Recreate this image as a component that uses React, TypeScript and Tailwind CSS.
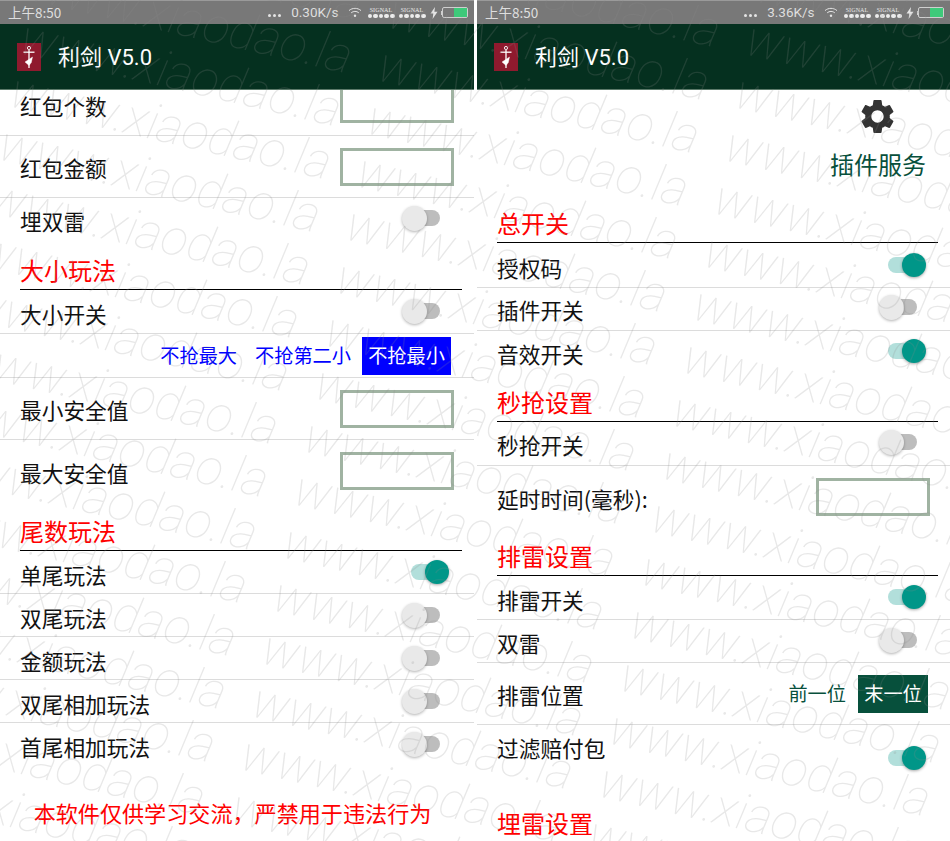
import React from "react";

const GEAR = "M19.14 12.94c.04-.3.06-.61.06-.94 0-.32-.02-.64-.07-.94l2.03-1.58a.49.49 0 0 0 .12-.61l-1.92-3.32a.488.488 0 0 0-.59-.22l-2.39.96c-.5-.38-1.03-.7-1.62-.94l-.36-2.54a.484.484 0 0 0-.48-.41h-3.84c-.24 0-.43.17-.47.41l-.36 2.54c-.59.24-1.13.57-1.62.94l-2.39-.96c-.22-.08-.47 0-.59.22L2.74 8.87c-.12.21-.08.47.12.61l2.03 1.58c-.05.3-.09.63-.09.94s.02.64.07.94l-2.03 1.58a.49.49 0 0 0-.12.61l1.92 3.32c.12.22.37.29.59.22l2.39-.96c.5.38 1.03.7 1.62.94l.36 2.54c.05.24.24.41.48.41h3.84c.24 0 .44-.17.47-.41l.36-2.54c.59-.24 1.13-.56 1.62-.94l2.39.96c.22.08.47 0 .59-.22l1.92-3.32c.12-.22.07-.47-.12-.61l-2.01-1.58zM12 15.6c-1.98 0-3.6-1.62-3.6-3.6s1.62-3.6 3.6-3.6 3.6 1.62 3.6 3.6-1.62 3.6-3.6 3.6z";

function Toggle({ on }: { on?: boolean }) {
  return (
    <div className={on ? "relative w-[29px] h-[16px] rounded-full bg-[#b2dfdb] shrink-0" : "relative w-[28px] h-[16px] rounded-full bg-[#bdbdbd] shrink-0"}>
      <div
        className={
          on
            ? "absolute left-[14px] top-[-4px] w-[24px] h-[24px] rounded-full bg-[#009688] shadow-[0_1px_3px_rgba(0,0,0,0.35)]"
            : "absolute left-[-10px] top-[-4px] w-[25px] h-[25px] rounded-full bg-[#e9e9e9] shadow-[0_1px_3px_rgba(0,0,0,0.3)]"
        }
      />
    </div>
  );
}

function Box() {
  return <div className="w-[114px] h-[38px] border-[3px] border-[#a0b3a2] shrink-0" />;
}

function Heading({ text, h }: { text: string; h: string }) {
  return (
    <div className={`${h} ml-[20px] mr-[12.5px] flex items-end pb-[7px] border-b border-black text-[24px] leading-[24px] text-[#ff0000]`}>
      {text}
    </div>
  );
}

function SwitchRow({ label, on, pad, h, line = true, right }: { label: string; on?: boolean; pad: string; h: string; line?: boolean; right?: boolean }) {
  return (
    <div className={`${h} ${pad} ${line ? "border-b border-[#dcdcdc]" : ""} ${right ? "pr-[33px]" : "pr-[34px]"} flex items-start justify-between pl-[20px]`}>
      <span className="leading-[22px]">{label}</span>
      <Toggle on={on} />
    </div>
  );
}

function BoxRow({ label, h, line = true }: { label: string; h: string; line?: boolean }) {
  return (
    <div className={`${h} ${line ? "border-b border-[#dcdcdc]" : ""} flex items-center justify-between pl-[20px] pr-[20px]`}>
      <span className="mt-[3px] leading-[22px]">{label}</span>
      <Box />
    </div>
  );
}

function Logo() {
  return (
    <svg width="24" height="28" viewBox="0 0 24 28" className="shrink-0">
      <rect width="24" height="28" fill="#8f1a2e" />
      <g fill="#fff" stroke="#fff">
        <circle cx="12" cy="5" r="1.6" fill="none" strokeWidth="0.9" />
        <path d="M6.5 9.2h11" strokeWidth="1.3" />
        <path d="M12 7v18" strokeWidth="1.3" />
        <path d="M8 19l7.5-5-1.2 5.5-2.2 3z" strokeWidth="0.4" />
      </g>
    </svg>
  );
}

function StatusBar({ speed }: { speed: string }) {
  return (
    <div className="h-[24px] shrink-0 bg-[#787878] border-t border-[#9a9a9a] flex items-center pl-[8px] pr-[6px] text-[#dedede]">
      <span className="text-[13.5px] leading-none">上午8:50</span>
      <div className="ml-auto flex items-center">
        <div className="flex gap-[2px] items-end h-[8px]">
          <i className="block w-[3px] h-[3px] rounded-full bg-[#e4e4e4]" />
          <i className="block w-[3px] h-[3px] rounded-full bg-[#e4e4e4]" />
          <i className="block w-[3px] h-[3px] rounded-full bg-[#e4e4e4]" />
        </div>
        <span className="ml-[10px] text-[13.5px] leading-none font-['Roboto',sans-serif]">{speed}</span>
        <svg width="14" height="11" viewBox="0 0 14 11" className="ml-[9px]" fill="none" stroke="#e4e4e4">
          <path d="M1 3.6C4.4.6 9.6.6 13 3.6" strokeWidth="1" />
          <path d="M3.2 5.8c2.2-1.9 5.4-1.9 7.6 0" strokeWidth="1" />
          <circle cx="7" cy="8.8" r="1.2" fill="#e4e4e4" stroke="none" />
        </svg>
        {[0, 1].map((k) => (
          <div key={k} className={k === 0 ? "ml-[6px] w-[27px]" : "ml-[4px] w-[27px]"}>
            <div className="text-[6px] leading-[6px] tracking-[0.1px] text-center text-[#e8e8e8] font-['Liberation_Serif',serif]">SIGNAL</div>
            <div className="flex justify-between mt-[1px]">
              {[0, 1, 2, 3, 4].map((d) => (
                <i key={d} className="block w-[4.5px] h-[4.5px] rounded-full bg-[#ececec]" />
              ))}
            </div>
          </div>
        ))}
        <svg width="8" height="12" viewBox="0 0 8 12" className="ml-[4px]">
          <path d="M5 0L0.5 6.6h2.8L2.6 12 7.5 4.8H4.4z" fill="#e4e4e4" />
        </svg>
        <div className="ml-[3px] flex items-center">
          <i className="block w-[1.5px] h-[4px] bg-[#d0d0d0]" />
          <div className="w-[26px] h-[11px] rounded-[2px] border border-[#cfcfcf] flex justify-end">
            <div className="w-[13px] h-full bg-[#3ec97a]" />
          </div>
        </div>
      </div>
    </div>
  );
}

function AppBar() {
  return (
    <div className="h-[66px] shrink-0 bg-[#05301f] border-b border-[#5c7a6a] flex items-center pl-[17px] text-white">
      <Logo />
      <span className="ml-[17px] mt-[2px] text-[22px] leading-none font-['Roboto','Noto_Sans_CJK_SC',sans-serif]">利剑 V5.0</span>
    </div>
  );
}

function LeftPanel() {
  return (
    <div className="w-[474px] h-[841px] shrink-0 flex flex-col overflow-hidden">
      <StatusBar speed="0.30K/s" />
      <AppBar />
      <div className="relative flex-1 overflow-hidden flex flex-col">
        <div className="h-[46px] shrink-0 border-b border-[#dcdcdc] flex items-start justify-between pl-[20px] pr-[20px] pt-[5px]">
          <span className="leading-[22px]">红包个数</span>
          <div className="mt-[-10px]">
            <Box />
          </div>
        </div>
        <BoxRow label="红包金额" h="h-[62px] shrink-0" />
        <SwitchRow label="埋双雷" pad="pt-[12px]" h="h-[43px] shrink-0" line={false} />
        <Heading text="大小玩法" h="h-[49px] shrink-0" />
        <SwitchRow label="大小开关" pad="pt-[13px]" h="h-[44px] shrink-0" />
        <div className="h-[44px] shrink-0 border-b border-[#dcdcdc] flex items-center justify-end pr-[23px] text-[19.2px] leading-none text-[#0000ff]">
          <span>不抢最大</span>
          <span className="ml-[18px]">不抢第二小</span>
          <span className="ml-[11px] w-[89px] h-[38px] bg-[#0000ff] text-white flex items-center justify-center">不抢最小</span>
        </div>
        <BoxRow label="最小安全值" h="h-[62px] shrink-0" />
        <BoxRow label="最大安全值" h="h-[62px] shrink-0" line={false} />
        <Heading text="尾数玩法" h="h-[49px] shrink-0" />
        <SwitchRow label="单尾玩法" on pad="pt-[13px]" h="h-[43px] shrink-0" />
        <SwitchRow label="双尾玩法" pad="pt-[13px]" h="h-[43px] shrink-0" />
        <SwitchRow label="金额玩法" pad="pt-[13px]" h="h-[43px] shrink-0" />
        <SwitchRow label="双尾相加玩法" pad="pt-[13px]" h="h-[43px] shrink-0" />
        <SwitchRow label="首尾相加玩法" pad="pt-[13px]" h="h-[43px] shrink-0" line={false} />
        <div className="mt-[35px] text-center text-[#ff0000] text-[22.1px] leading-[22px] pr-[9px]">本软件仅供学习交流，严禁用于违法行为</div>
      </div>
    </div>
  );
}

function RightPanel() {
  return (
    <div className="w-[473px] h-[841px] shrink-0 flex flex-col overflow-hidden">
      <StatusBar speed="3.36K/s" />
      <AppBar />
      <div className="flex-1 overflow-hidden flex flex-col">
        <div className="h-[104px] shrink-0 flex flex-col items-end">
          <svg width="41" height="41" viewBox="0 0 24 24" className="mt-[6px] mr-[52px] shrink-0">
            <path d={GEAR} fill="#333333" />
          </svg>
          <span className="mt-[15px] mr-[24px] text-[24px] leading-[24px] text-[#07503c]">插件服务</span>
        </div>
        <Heading text="总开关" h="h-[49px] shrink-0" />
        <SwitchRow right label="授权码" on pad="pt-[14px]" h="h-[45px] shrink-0" />
        <SwitchRow right label="插件开关" pad="pt-[11px]" h="h-[43px] shrink-0" />
        <SwitchRow right label="音效开关" on pad="pt-[12px]" h="h-[43px] shrink-0" line={false} />
        <Heading text="秒抢设置" h="h-[48px] shrink-0" />
        <SwitchRow right label="秒抢开关" pad="pt-[12px]" h="h-[44px] shrink-0" />
        <div className="h-[61px] shrink-0 flex items-start justify-between pl-[20px] pr-[20px] pt-[12px]">
          <span className="mt-[10px] leading-[22px]">延时时间(毫秒):</span>
          <Box />
        </div>
        <Heading text="排雷设置" h="h-[49px] shrink-0" />
        <SwitchRow right label="排雷开关" on pad="pt-[13px]" h="h-[44px] shrink-0" />
        <SwitchRow right label="双雷" pad="pt-[12px]" h="h-[43px] shrink-0" />
        <div className="h-[62px] shrink-0 border-b border-[#dcdcdc] flex items-center justify-between pl-[20px] pr-[22px]">
          <span className="mt-[2px] leading-[22px]">排雷位置</span>
          <div className="flex items-center text-[19.2px] leading-none">
            <span className="text-[#07503c]">前一位</span>
            <span className="ml-[12px] w-[70px] h-[38px] bg-[#07503c] text-white flex items-center justify-center">末一位</span>
          </div>
        </div>
        <div className="h-[70px] shrink-0 flex items-start justify-between pl-[20px] pr-[33px] pt-[12px]">
          <span className="leading-[22px]">过滤赔付包</span>
          <div className="mt-[13px]">
            <Toggle on />
          </div>
        </div>
        <div className="pl-[20px] mt-[16px] text-[24px] leading-[24px] text-[#ff0000]">埋雷设置</div>
      </div>
    </div>
  );
}

function Watermark() {
  const marks: { x: number; y: number; k: string }[] = [];
  for (let r = -6; r < 20; r++) {
    for (let c = -2; c < 5; c++) {
      marks.push({ x: 6 + c * 347 - r * 10.5, y: 118 + c * 80 + r * 53, k: `${r}-${c}` });
    }
  }
  return (
    <div className="absolute inset-0 overflow-hidden pointer-events-none">
      {marks.map((m) => (
        <span
          key={m.k}
          className="absolute whitespace-nowrap origin-top-left rotate-[13deg] text-[50px] leading-none italic font-thin text-[#8c8c8c]/20 font-['Roboto',sans-serif]"
          style={{ left: m.x, top: m.y }}
        >
          www.xiaodao.la
        </span>
      ))}
    </div>
  );
}

export default function App() {
  return (
    <div className="relative w-[950px] h-[841px] overflow-hidden bg-white flex gap-[3px] text-[21.7px] text-[#111] font-['Noto_Sans_CJK_SC','Noto_Sans',sans-serif]">
      <LeftPanel />
      <RightPanel />
      <Watermark />
    </div>
  );
}
